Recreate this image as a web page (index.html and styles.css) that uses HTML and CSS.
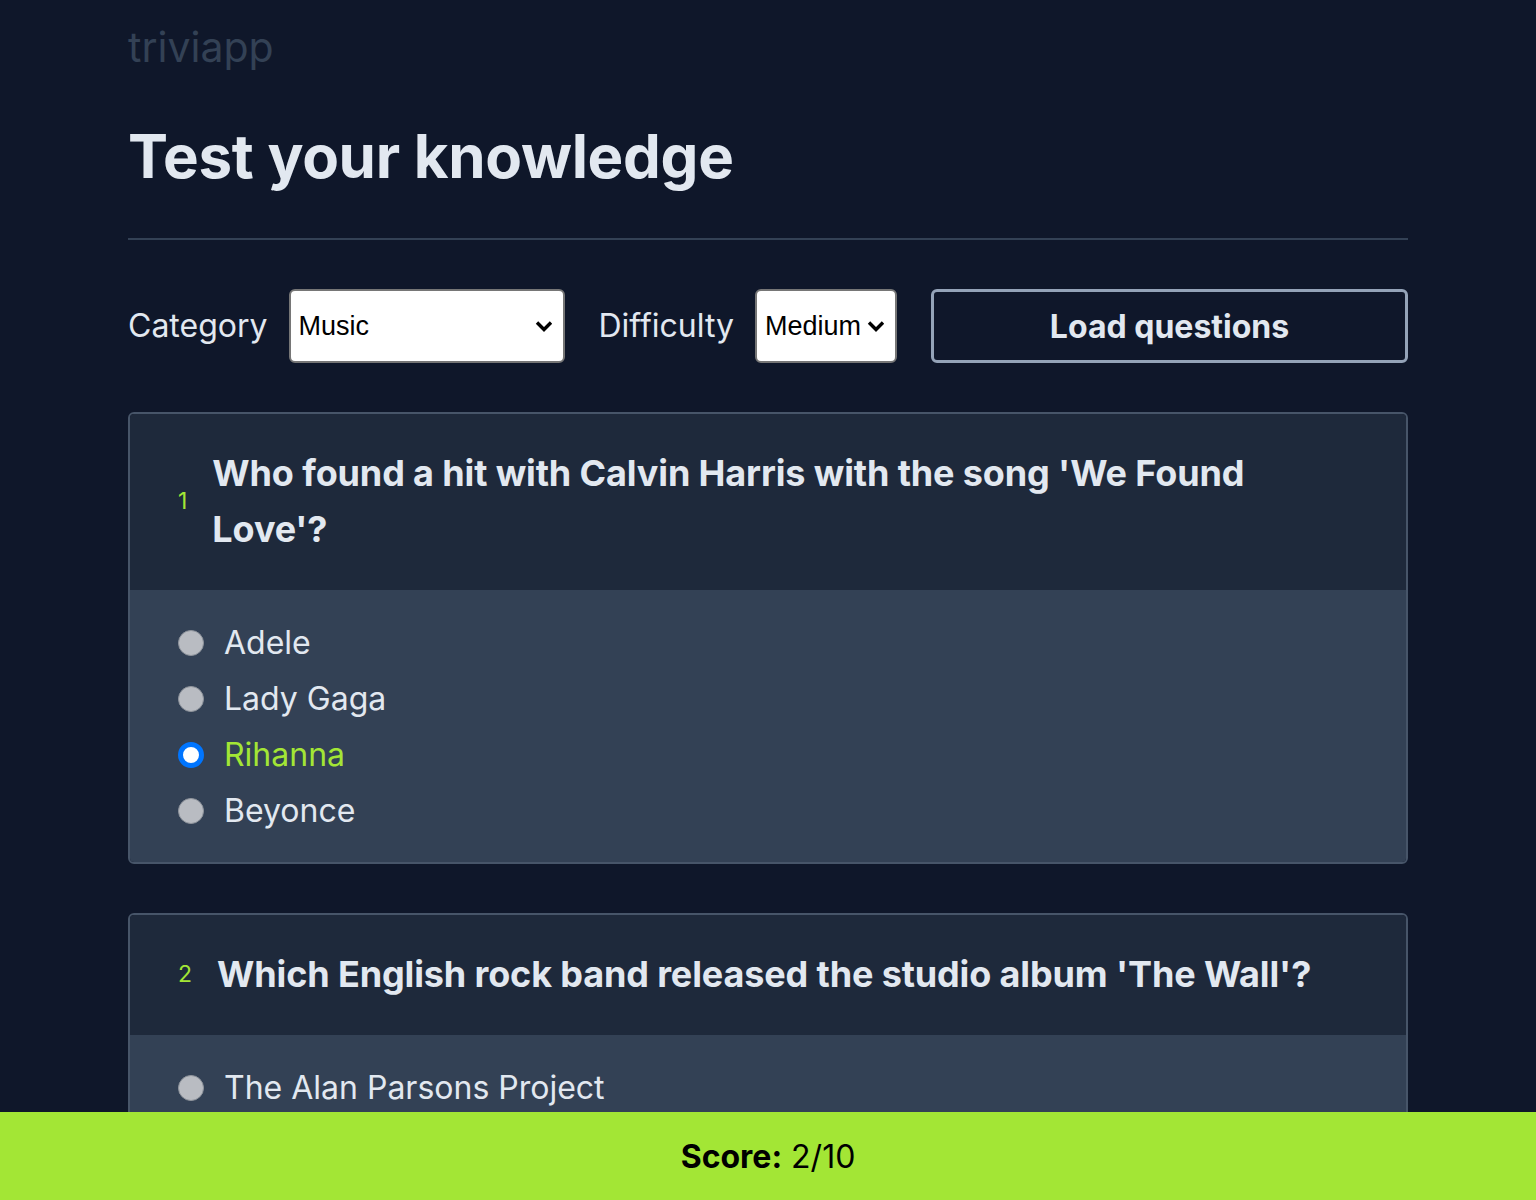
FILE: index.html
```html
<!DOCTYPE html>
<html lang="en">
<head>
<meta charset="utf-8">
<title>triviapp</title>
<link rel="stylesheet" href="styles.css">
</head>
<body>
<div class="page">
  <header class="logo">triviapp</header>
  <h1 class="title">Test your knowledge</h1>
  <hr class="divider">
  <form class="controls">
    <label class="field">
      <span class="field-label">Category</span>
      <select class="select select-cat">
        <option>Music</option>
      </select>
    </label>
    <label class="field">
      <span class="field-label">Difficulty</span>
      <select class="select select-diff">
        <option>Medium</option>
      </select>
    </label>
    <button type="button" class="load-btn">Load questions</button>
  </form>

  <section class="card">
    <div class="card-head">
      <span class="qnum">1</span>
      <h2 class="question">Who found a hit with Calvin Harris with the song 'We Found Love'?</h2>
    </div>
    <div class="answers">
      <label class="answer"><span class="radio"></span><span>Adele</span></label>
      <label class="answer"><span class="radio"></span><span>Lady Gaga</span></label>
      <label class="answer correct"><span class="radio checked"></span><span>Rihanna</span></label>
      <label class="answer"><span class="radio"></span><span>Beyonce</span></label>
    </div>
  </section>

  <section class="card">
    <div class="card-head">
      <span class="qnum">2</span>
      <h2 class="question">Which English rock band released the studio album 'The Wall'?</h2>
    </div>
    <div class="answers">
      <label class="answer"><span class="radio"></span><span>The Alan Parsons Project</span></label>
      <label class="answer"><span class="radio"></span><span>Pink Floyd</span></label>
      <label class="answer"><span class="radio"></span><span>Genesis</span></label>
      <label class="answer"><span class="radio"></span><span>Queen</span></label>
    </div>
  </section>
</div>
<footer class="score"><b>Score:</b> 2/10</footer>
</body>
</html>
```
FILE: styles.css
```css
* { box-sizing: border-box; }
html, body { margin: 0; padding: 0; }
body {
  background: #0f172a;
  color: #e2e8f0;
  font-family: Inter, "Noto Sans", sans-serif;
}
.page {
  max-width: 1280px;
  margin: 0 auto;
  padding-bottom: 120px;
}
.logo {
  font-size: 41px;
  line-height: 48px;
  color: #334155;
  padding-top: 23px;
  font-weight: 400;
}
.title {
  margin: 49px 0 0;
  font-size: 60px;
  line-height: 72px;
  font-weight: 700;
  letter-spacing: -0.3px;
  color: #e2e8f0;
}
.divider {
  margin: 46px 0 0;
  border: 0;
  height: 2px;
  background: #334155;
}
.controls {
  display: flex;
  align-items: center;
  gap: 34px;
  margin-top: 49px;
}
.field {
  display: flex;
  align-items: center;
  gap: 21px;
}
.field-label {
  font-size: 32px;
  line-height: 38px;
  color: #e2e8f0;
}
.select {
  -webkit-appearance: none;
  appearance: none;
  height: 74px;
  font-family: "Liberation Sans", Arial, sans-serif;
  font-size: 27px;
  color: #000;
  background-color: #fff;
  background-image: url("data:image/svg+xml,%3Csvg xmlns='http://www.w3.org/2000/svg' width='18' height='12' viewBox='0 0 18 12'%3E%3Cpath d='M2 2.5 L9 9.5 L16 2.5' fill='none' stroke='%23000' stroke-width='3.4'/%3E%3C/svg%3E");
  background-repeat: no-repeat;
  background-position: right 10px center;
  background-size: 18px 12px;
  border: 2px solid #767676;
  border-radius: 6px;
  padding: 0 8px;
}
.select-cat { width: 276px; }
.select-diff { width: 142px; }
.load-btn {
  flex: 1;
  height: 74px;
  background: transparent;
  border: 3px solid #94a3b8;
  border-radius: 6px;
  color: #e2e8f0;
  font-family: Inter, sans-serif;
  font-size: 32px;
  font-weight: 700;
}
.card {
  margin-top: 49px;
  border: 2px solid #475569;
  border-radius: 6px;
  overflow: hidden;
}
.card-head {
  background: #1e293b;
  display: flex;
  align-items: center;
  gap: 25px;
  padding: 31px 48px 33px;
}
.qnum {
  color: #a3e635;
  font-size: 23px;
  line-height: 28px;
}
.question {
  margin: 0;
  font-size: 36px;
  line-height: 56px;
  font-weight: 700;
  letter-spacing: -0.13px;
  color: #e2e8f0;
}
.answers {
  background: #334155;
  display: flex;
  flex-direction: column;
  gap: 20px;
  padding: 35px 48px 33px;
}
.answer {
  display: flex;
  align-items: center;
  gap: 20px;
  font-size: 32px;
  line-height: 36px;
  color: #e2e8f0;
}
.answer.correct { color: #a3e635; }
.radio {
  width: 26px;
  height: 26px;
  border-radius: 50%;
  background: #b9bcc2;
  border: 1.5px solid #8f949c;
  flex: none;
}
.radio.checked {
  background: #fff;
  border: 5px solid #0075ff;
}
.score {
  position: fixed;
  left: 0;
  right: 0;
  bottom: 0;
  height: 88px;
  background: #a3e635;
  color: #000;
  display: flex;
  align-items: center;
  justify-content: center;
  font-size: 32px;
  font-family: Inter, sans-serif;
}
.score b { font-weight: 700; margin-right: 9px; }
```
